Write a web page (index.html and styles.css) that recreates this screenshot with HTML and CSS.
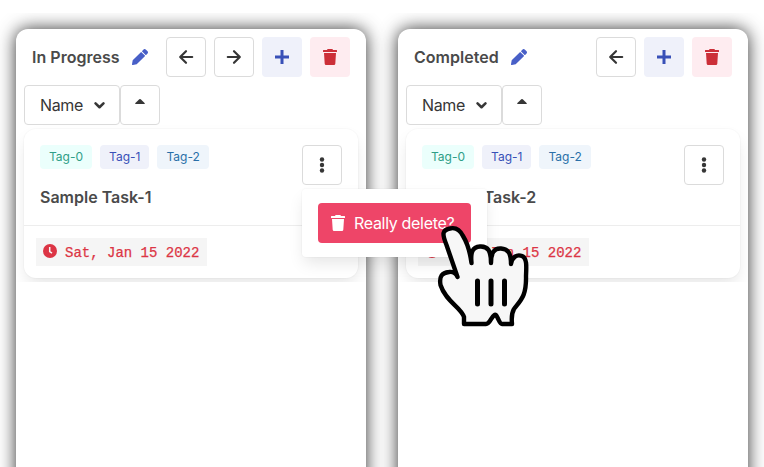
FILE: index.html
```
<!DOCTYPE html>
<html lang="en">
<head>
<meta charset="utf-8">
<title>Task board</title>
<link rel="stylesheet" href="styles.css">
</head>
<body>
<svg class="defs" width="0" height="0" aria-hidden="true">
  <symbol id="pencil" viewBox="0 0 512 512"><path d="M498 142l-46 46c-5 5-13 5-17 0L324 77c-5-5-5-12 0-17l46-46c19-19 49-19 68 0l60 60c19 19 19 49 0 68zm-214-42L22 362 0 484c-3 16 12 30 28 28l122-22 262-262c5-5 5-13 0-17L301 100c-4-5-12-5-17 0z"/></symbol>
  <symbol id="left" viewBox="0 0 16 16"><path d="M14.200 8H2.500M8 2.200L2.200 8L8 13.800" fill="none" stroke="currentColor" stroke-width="2.200" stroke-linejoin="round" stroke-linecap="round"/></symbol>
  <symbol id="right" viewBox="0 0 16 16"><path d="M1.800 8H13.500M8 2.200L13.800 8L8 13.800" fill="none" stroke="currentColor" stroke-width="2.200" stroke-linejoin="round" stroke-linecap="round"/></symbol>
  <symbol id="plus" viewBox="0 0 16 16"><path d="M1 8H15M8 1V15" fill="none" stroke="currentColor" stroke-width="3"/></symbol>
  <symbol id="trash" viewBox="0 0 16 16"><path d="M1.500 1H5L5.600 0h4.800L11 1h3.500a.5.5 0 0 1 .5.5V3H1V1.500a.5.5 0 0 1 .5-.5zM2 4H14L13.300 14.700A1.400 1.400 0 0 1 11.900 16H4.100A1.400 1.400 0 0 1 2.700 14.700z"/></symbol>
  <symbol id="chevron" viewBox="0 0 10 8"><path d="M1.400 2L5 5.600L8.600 2" fill="none" stroke="currentColor" stroke-width="2.300" stroke-linejoin="round" stroke-linecap="round"/></symbol>
  <symbol id="caret" viewBox="0 0 10 5"><path d="M.8 5C0 5-.1 4.400.4 3.900L4.300.3Q5-.3 5.700.3L9.600 3.900C10.100 4.400 10 5 9.200 5z"/></symbol>
  <symbol id="dots" viewBox="0 0 6 16"><circle cx="3" cy="2.500" r="2.200"/><circle cx="3" cy="8" r="2.200"/><circle cx="3" cy="13.500" r="2.200"/></symbol>
  <symbol id="clock" viewBox="0 0 14 14"><circle cx="7" cy="7" r="7"/><path d="M6.700 3V7.500L9 9.200" fill="none" stroke="#f5f5f5" stroke-width="1.500"/></symbol>
</svg>
<main class="board">
  <section class="column">
    <header class="column-head">
      <h2 class="title">In Progress</h2>
      <svg class="icon edit"><use href="#pencil"/></svg>
      <div class="actions">
        <button class="button"><svg class="icon"><use href="#left"/></svg></button>
        <button class="button"><svg class="icon"><use href="#right"/></svg></button>
        <button class="button add"><svg class="icon"><use href="#plus"/></svg></button>
        <button class="button remove"><svg class="icon"><use href="#trash"/></svg></button>
      </div>
    </header>
    <div class="sort">
      <button class="button sort-by"><span class="sort-name">Name</span><svg class="chevron"><use href="#chevron"/></svg></button>
      <button class="button order"><svg class="caret"><use href="#caret"/></svg></button>
    </div>
    <div class="list">
      <article class="card">
        <div class="card-main">
          <div class="info">
            <div class="tags"><span class="tag teal">Tag-0</span><span class="tag indigo">Tag-1</span><span class="tag blue">Tag-2</span></div>
            <h3 class="task">Sample Task-1</h3>
          </div>
          <button class="button"><svg class="dots"><use href="#dots"/></svg></button>
        </div>
        <footer class="card-foot"><code class="date"><svg class="clock"><use href="#clock"/></svg><span>Sat, Jan 15 2022</span></code></footer>
      </article>
    </div>
  </section>
  <section class="column">
    <header class="column-head">
      <h2 class="title">Completed</h2>
      <svg class="icon edit"><use href="#pencil"/></svg>
      <div class="actions">
        <button class="button"><svg class="icon"><use href="#left"/></svg></button>
        <button class="button add"><svg class="icon"><use href="#plus"/></svg></button>
        <button class="button remove"><svg class="icon"><use href="#trash"/></svg></button>
      </div>
    </header>
    <div class="sort">
      <button class="button sort-by"><span class="sort-name">Name</span><svg class="chevron"><use href="#chevron"/></svg></button>
      <button class="button order"><svg class="caret"><use href="#caret"/></svg></button>
    </div>
    <div class="list">
      <article class="card">
        <div class="card-main">
          <div class="info">
            <div class="tags"><span class="tag teal">Tag-0</span><span class="tag indigo">Tag-1</span><span class="tag blue">Tag-2</span></div>
            <h3 class="task">Sample Task-2</h3>
          </div>
          <button class="button"><svg class="dots"><use href="#dots"/></svg></button>
        </div>
        <footer class="card-foot"><code class="date"><svg class="clock"><use href="#clock"/></svg><span>Sat, Jan 15 2022</span></code></footer>
      </article>
    </div>
  </section>
</main>
<div class="popover"><button class="confirm"><svg class="icon"><use href="#trash"/></svg><span>Really delete?</span></button></div>
<svg class="pointer" viewBox="434 222 98 108">
  <path d="M457.500 277L446.500 245C442 234 442 230 450 228.500C456 227 460 230 463 236C468 244 470 252 471.500 263C470.500 253 472 247 480 246.500C488 246 491 251 491 263C491 253 494 248 501 248.500C508 249 511 253 511 264C512 257 517 254 522 256C527 258 526.500 266 526 276C526.500 296 521 300 514 309C511 314 511.500 319 512 324H502C499 324 497 313 494.500 315C491 317 490 324 486 324H464V317C461 307 446 302 440.500 285C439 276 442 273 449 272Q455 271 457.500 277Z" fill="#f7f7f7" stroke="#000" stroke-width="4.400" stroke-linejoin="round"/>
  <path d="M477.500 281V304M491 281V304M504.500 281V304" fill="none" stroke="#000" stroke-width="5" stroke-linecap="round"/>
</svg>
</body>
</html>
```
FILE: styles.css
```
* { box-sizing: border-box; }
body {
  margin: 0;
  height: 467px;
  overflow: hidden;
  background: #fff;
  color: #363636;
  font: 16px/24px Inter, "Liberation Sans", sans-serif;
}
.defs { position: absolute; }
h2, h3 { margin: 0; }
svg { fill: currentColor; flex: none; }
.board {
  display: flex;
  gap: 32px;
  height: 454px;
  margin-top: 13px;
  padding: 16px 16px 0;
  overflow: hidden;
}
.column {
  flex: none;
  width: 350px;
  height: 600px;
  padding: 8px;
  border-radius: 12px;
  background: #fff;
  box-shadow: 0 0 18px rgba(0, 0, 0, .8);
}
.column-head { display: flex; align-items: center; height: 40px; padding: 0 8px; }
.title { font-size: 16px; line-height: 24px; font-weight: 600; color: #4a4a4a; letter-spacing: .03px; }
.icon { width: 16px; height: 16px; }
.edit { margin-left: 12px; color: #485fc7; }
.actions { display: flex; gap: 8px; margin-left: auto; }
.button {
  display: flex;
  align-items: center;
  justify-content: center;
  flex: none;
  width: 40px;
  height: 40px;
  padding: 0;
  border: 1px solid #dbdbdb;
  border-radius: 4px;
  background: #fff;
  color: #363636;
  font: inherit;
}
.add { border: 0; background: #eff1fa; color: #3850b7; }
.remove { border: 0; background: #feecf0; color: #cc2f38; }
.sort { display: flex; margin-top: 8px; }
.sort-by { width: 96px; gap: 11px; letter-spacing: -.35px; padding-left: 1px; }
.chevron { width: 11px; height: 9px; }
.caret { width: 10px; height: 5px; margin-bottom: 7px; }
.dots { width: 6px; height: 16px; }
.list { margin: 0 -8px; padding: 4px 8px; overflow: hidden; }
.card {
  height: 149px;
  border-radius: 12px;
  background: #fff;
  box-shadow: 0 8px 16px -2px rgba(10, 10, 10, .1), 0 0 0 1px rgba(10, 10, 10, .02);
}
.card-main { display: flex; justify-content: space-between; height: 97px; padding: 16px; border-bottom: 1px solid #ededed; }
.tags { display: flex; gap: 8px; }
.tag { height: 24px; padding: 0 9px; border-radius: 4px; font-size: 12px; }
.teal { background: #ebfffc; color: #2f9e87; }
.indigo { background: #eff1fa; color: #3850b7; }
.blue { background: #eff5fb; color: #296fa8; }
.task { margin-top: 16px; font-size: 16px; line-height: 24px; font-weight: 600; color: #4a4a4a; }
.card-foot { padding: 12px; }
.date {
  display: flex;
  align-items: center;
  width: 171px;
  height: 28px;
  padding: 2px 0 0 7px;
  gap: 8px;
  background: #f5f5f5;
  color: #dc3545;
  font: 14px/26px "Liberation Mono", monospace;
  -webkit-text-stroke: .25px currentColor;
  white-space: pre;
}
.clock { width: 14px; height: 14px; margin-bottom: 4px; }
.popover {
  position: absolute;
  left: 302px;
  top: 189px;
  width: 185px;
  height: 68px;
  padding: 14px 16px;
  border-radius: 4px;
  background: #fff;
  box-shadow: 0 8px 16px -2px rgba(10, 10, 10, .1), 0 0 0 1px rgba(10, 10, 10, .02);
}
.confirm {
  display: flex;
  align-items: center;
  gap: 8px;
  width: 153px;
  height: 40px;
  padding: 0 12px;
  border: 0;
  border-radius: 4px;
  background: #ee4568;
  color: #fff;
  font: inherit;
  letter-spacing: -.32px;
  white-space: nowrap;
}
.pointer { position: absolute; left: 434px; top: 222px; width: 98px; height: 108px; }
```
